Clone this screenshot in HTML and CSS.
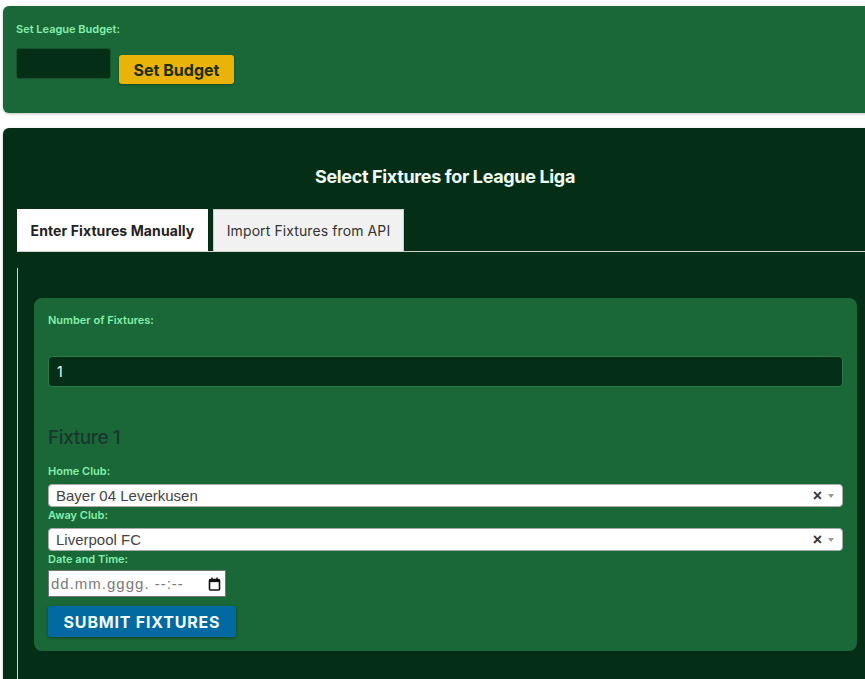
FILE: index.html
```html
<!DOCTYPE html>
<html lang="en">
<head>
<meta charset="utf-8">
<title>League Fixtures</title>
<link rel="stylesheet" href="styles.css">
</head>
<body>
<div class="page">
  <section class="card budget-card">
    <label class="field-label">Set League Budget:</label>
    <div class="budget-row">
      <div class="budget-input"></div>
      <button class="btn-budget">Set Budget</button>
    </div>
  </section>

  <section class="card fixtures-card">
    <h2 class="card-title">Select Fixtures for League Liga</h2>
    <div class="tabs">
      <div class="tab tab-active">Enter Fixtures Manually</div>
      <div class="tab">Import Fixtures from API</div>
    </div>
    <div class="tab-content">
      <div class="panel">
        <label class="field-label">Number of Fixtures:</label>
        <div class="num-input">1</div>
        <h3 class="fixture-title">Fixture 1</h3>
        <label class="field-label">Home Club:</label>
        <div class="select">
          <span class="select-text">Bayer 04 Leverkusen</span>
          <span class="select-clear">×</span>
          <span class="select-arrow"></span>
        </div>
        <label class="field-label">Away Club:</label>
        <div class="select">
          <span class="select-text">Liverpool FC</span>
          <span class="select-clear">×</span>
          <span class="select-arrow"></span>
        </div>
        <label class="field-label">Date and Time:</label>
        <div class="date-input">
          <span class="date-text">dd.mm.gggg. --:--</span>
          <svg class="cal-icon" width="13" height="14" viewBox="0 0 13 14">
            <rect x="1.5" y="2.5" width="10" height="10.5" rx="1" fill="none" stroke="#111" stroke-width="1.6"/>
            <rect x="1.5" y="2.5" width="10" height="2.6" fill="#111"/>
            <rect x="3.3" y="0.5" width="1.4" height="3" fill="#111"/>
            <rect x="8.3" y="0.5" width="1.4" height="3" fill="#111"/>
          </svg>
        </div>
        <button class="btn-submit">SUBMIT FIXTURES</button>
      </div>
    </div>
  </section>
</div>
</body>
</html>
```
FILE: styles.css
```css
html, body {
  margin: 0;
  padding: 0;
  background: #ffffff;
  overflow: hidden;
}
body {
  font-family: Inter, "Liberation Sans", sans-serif;
}
.page {
  padding: 6px 0 0 3px;
  width: 884px;
}
.card {
  border-radius: 6px;
  box-shadow: 0 1px 3px rgba(0,0,0,0.25);
}
.budget-card {
  background: #1a6737;
  padding: 16px 13px 29px;
  margin-bottom: 15px;
}
.field-label {
  display: block;
  color: #86efac;
  font-size: 11px;
  font-weight: 600;
  line-height: 14px;
}
.budget-row {
  display: flex;
  align-items: flex-start;
  gap: 8px;
  margin-top: 12px;
}
.budget-input {
  width: 93px;
  height: 29px;
  background: #052e16;
  border: 1px solid #14532d;
  border-radius: 3px;
}
.btn-budget {
  margin-top: 7px;
  height: 29px;
  width: 115px;
  background: #eab308;
  border: none;
  border-radius: 3px;
  color: #1a2e05;
  font-family: Inter, "Liberation Sans", sans-serif;
  font-size: 16px;
  font-weight: 700;
  padding: 0;
  box-shadow: 0 1px 2px rgba(0,0,0,0.3);
}
.fixtures-card {
  background: #052e16;
  padding: 36px 14px 40px;
  border-radius: 6px 6px 0 0;
  min-height: 600px;
}
.card-title {
  margin: 0;
  text-align: center;
  color: #f0fdf4;
  font-size: 18px;
  font-weight: 700;
  letter-spacing: -0.35px;
  line-height: 26px;
}
.tabs {
  display: flex;
  gap: 5px;
  margin-top: 19px;
  border-bottom: 1px solid #cfd3cf;
}
.tab {
  height: 42px;
  box-sizing: border-box;
  display: flex;
  align-items: center;
  justify-content: center;
  font-size: 14px;
  letter-spacing: 0.1px;
  color: #333;
  background: #f1f1f1;
  border: 1px solid #cccccc;
  border-bottom: none;
  width: 191px;
}
.tab-active {
  background: #ffffff;
  color: #222;
  font-weight: 700;
  border-color: #ffffff;
}
.tab-content {
  margin-top: 16px;
  border-left: 1px solid #cfd3cf;
  padding: 30px 16px 40px;
}
.panel {
  background: #1a6737;
  border-radius: 8px;
  padding: 15px 14px 14px;
}
.num-input {
  margin-top: 29px;
  height: 29px;
  background: #052e16;
  border: 1px solid #2b7a47;
  border-radius: 4px;
  color: #f0fdf4;
  font-size: 14px;
  line-height: 29px;
  padding-left: 8px;
}
.fixture-title {
  margin: 39px 0 0;
  color: #1a3632;
  font-size: 19px;
  font-weight: 500;
  letter-spacing: -0.4px;
  line-height: 24px;
}
.fixture-title + .field-label {
  margin-top: 14px;
}
.select + .field-label {
  margin-top: 1px;
}
.select {
  margin-top: 6px;
  height: 23px;
  box-sizing: border-box;
  background: #fff;
  border: 1px solid #aaaaaa;
  border-radius: 4px;
  display: flex;
  align-items: center;
  padding: 0 8px 0 7px;
  font-family: "Liberation Sans", Arial, sans-serif;
}
.select-text {
  flex: 1;
  font-size: 15px;
  color: #444;
}
.select-clear {
  font-size: 16px;
  font-weight: 700;
  color: #333;
  margin-right: 6px;
  line-height: 1;
}
.select-arrow {
  width: 0;
  height: 0;
  border-left: 3px solid transparent;
  border-right: 3px solid transparent;
  border-top: 4px solid #999;
}
.date-input {
  margin-top: 4px;
  width: 178px;
  height: 27px;
  box-sizing: border-box;
  background: #fff;
  border: 1px solid #767676;
  display: flex;
  align-items: center;
  justify-content: space-between;
  padding: 0 4px 0 2px;
  font-family: "Liberation Sans", Arial, sans-serif;
}
.date-text {
  font-size: 15px;
  letter-spacing: 1px;
  color: #7a7a7a;
}
.cal-icon {
  display: block;
}
.btn-submit {
  display: block;
  margin-top: 9px;
  width: 188px;
  height: 31px;
  background: #0369a1;
  border: none;
  border-radius: 2px;
  color: #f0f9ff;
  font-family: Inter, "Liberation Sans", sans-serif;
  font-size: 16px;
  font-weight: 700;
  letter-spacing: 0.8px;
  box-shadow: 0 1px 3px rgba(0,0,0,0.35);
}
```
